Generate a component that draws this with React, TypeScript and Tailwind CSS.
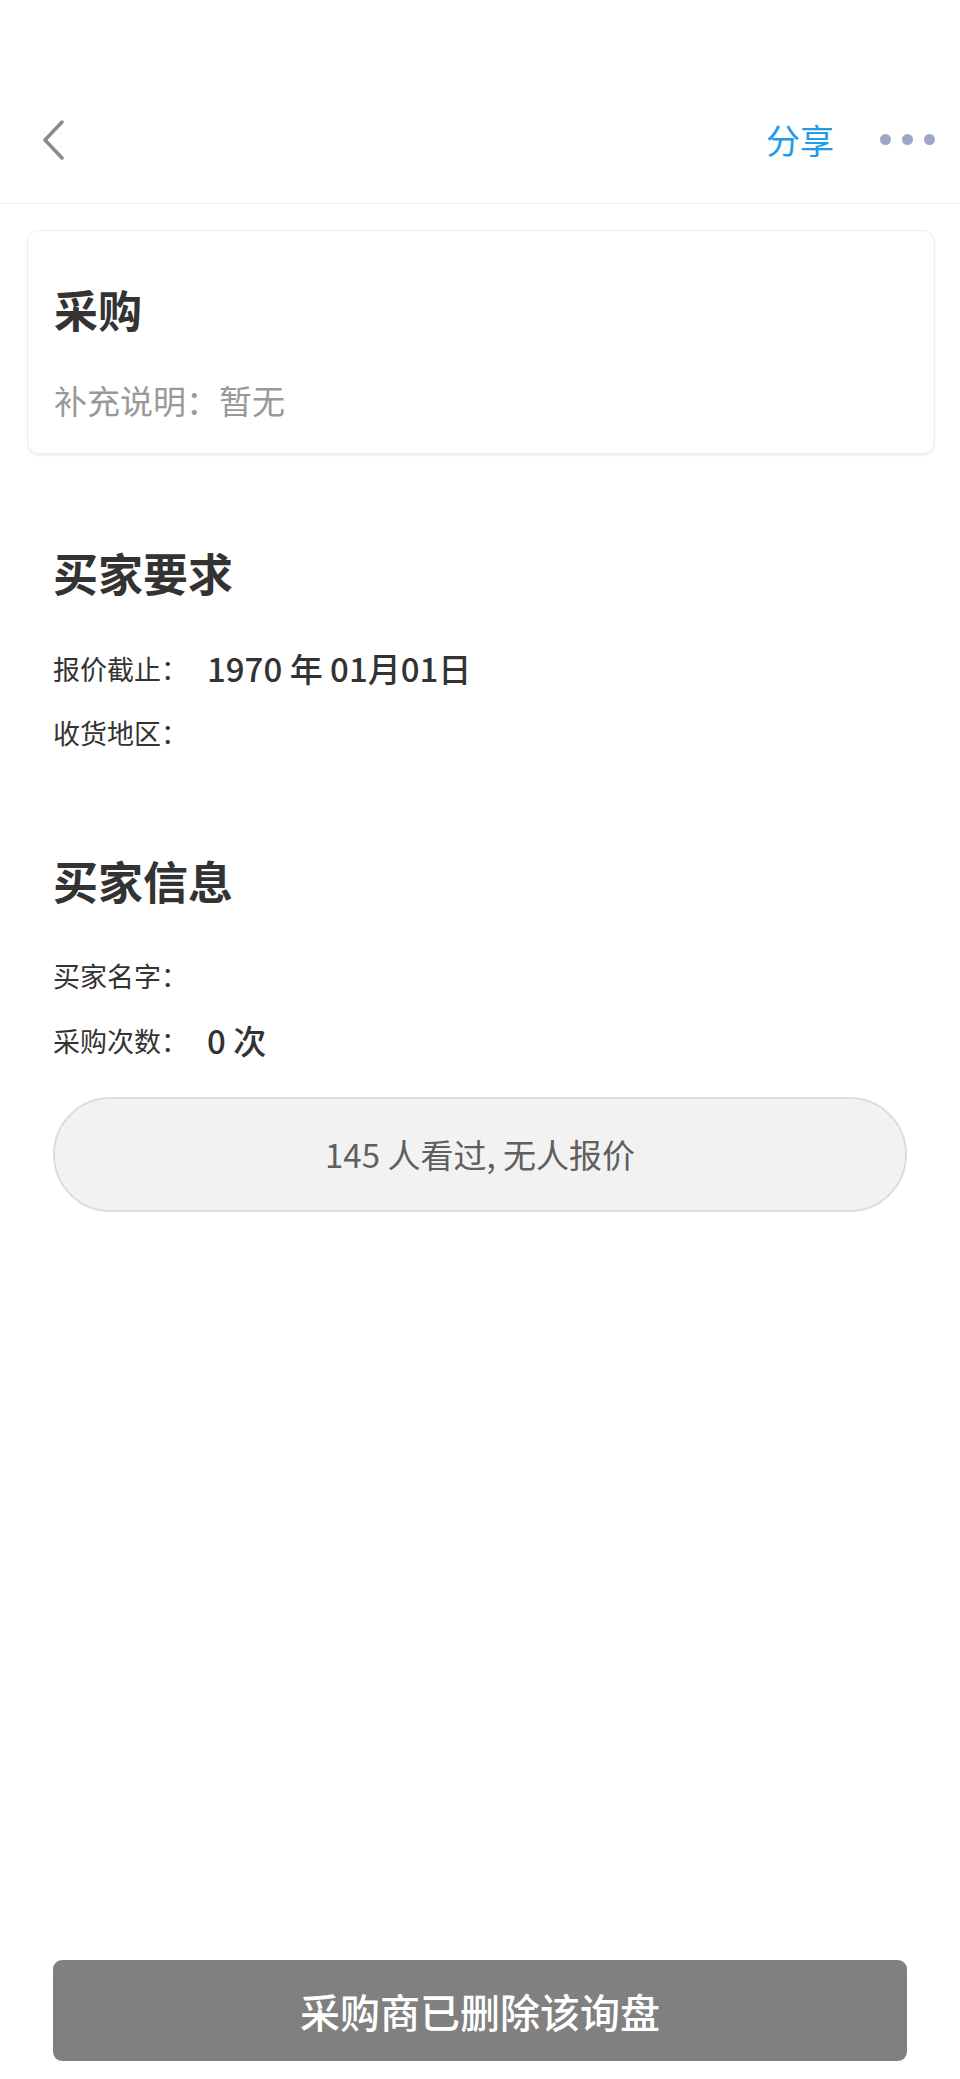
const font = { fontFamily: '"Noto Sans CJK SC", "Noto Sans", sans-serif' };

const Row = ({ label, value }: { label: string; value?: string }) => (
	<div className="flex h-[48px] items-center">
		<span className="w-[154px] text-[27px] text-[#333333]">{label}</span>
		{value && <span className="text-[33px] font-medium text-[#333333]">{value}</span>}
	</div>
);

const App = () => {
	return (
		<div className="flex min-h-screen flex-col bg-white" style={font}>
			{/* header */}
			<div className="h-[76px]" />
			<div className="flex h-[128px] items-center border-b border-[#ececec] pl-[40px] pr-[25px]">
				<svg width="26" height="40" viewBox="0 0 26 40" fill="none">
					<polyline
						points="22,2 5,20 22,38"
						stroke="#8a8a8a"
						strokeWidth="3.5"
						strokeLinecap="round"
						strokeLinejoin="round"
					/>
				</svg>
				<div className="ml-auto flex items-center">
					<span className="text-[34px] leading-none text-[#1e9be9]">分享</span>
					<div className="ml-[46px] flex items-center gap-[11px]">
						<span className="h-[11px] w-[11px] rounded-full bg-[#9ea6c4]" />
						<span className="h-[11px] w-[11px] rounded-full bg-[#9ea6c4]" />
						<span className="h-[11px] w-[11px] rounded-full bg-[#9ea6c4]" />
					</div>
				</div>
			</div>

			{/* card */}
			<div className="mx-[25px] ml-[27px] mt-[26px] rounded-[12px] border border-[#ececec] px-[26px] pb-[30px] pt-[48px] shadow-[0_2px_2px_rgba(0,0,0,0.06)]">
				<div className="flex h-[60px] items-center text-[44px] font-bold text-[#333333]">采购</div>
				<div className="mt-[40px] flex h-[44px] items-center text-[33px] text-[#999999]">补充说明：暂无</div>
			</div>

			<div className="px-[53px]">
				<div className="mt-[89px] flex h-[60px] items-center text-[45px] font-bold text-[#333333]">买家要求</div>
				<div className="mt-[42px] flex flex-col gap-[16px]">
					<Row label="报价截止：" value="1970 年 01月01日" />
					<Row label="收货地区：" />
				</div>

				<div className="mt-[94px] flex h-[60px] items-center text-[45px] font-bold text-[#333333]">买家信息</div>
				<div className="mt-[41px] flex flex-col gap-[17px]">
					<Row label="买家名字：" />
					<Row label="采购次数：" value="0 次" />
				</div>

				<div className="mt-[32px] flex h-[115px] items-center justify-center rounded-full border-2 border-[#dddddd] bg-[#f2f2f2] text-[33px] text-[#5f5f5f]">
					145 人看过, 无人报价
				</div>
			</div>

			{/* bottom */}
			<div className="mt-auto px-[53px] pb-[18px]">
				<div className="flex h-[101px] items-center justify-center rounded-[9px] bg-[#808080] text-[40px] font-medium text-white">
					采购商已删除该询盘
				</div>
			</div>
		</div>
	);
};

export default App;
